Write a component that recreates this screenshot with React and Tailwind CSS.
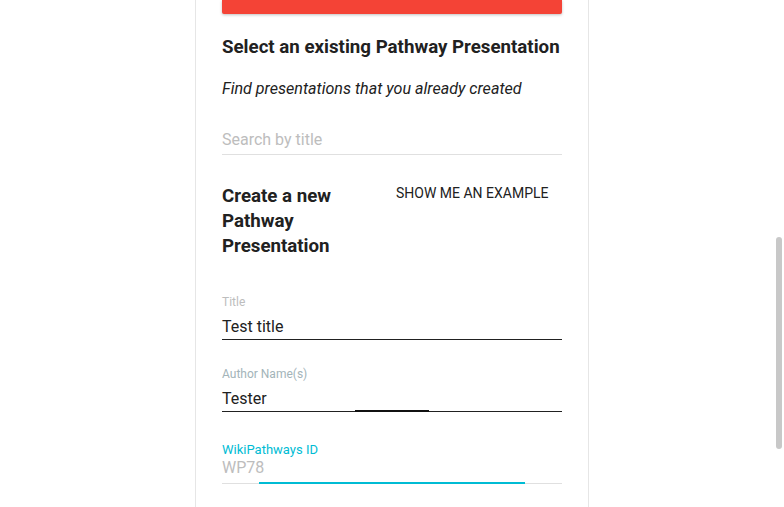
export default function App() {
  return (
    <div className="relative min-h-[507px] bg-white" style={{ fontFamily: "Roboto, 'Liberation Sans', sans-serif" }}>
      <div className="mx-auto w-[394px] min-h-[507px] border-x border-[#e6e6e6] bg-white px-[26px] pb-8">
        <div className="h-[14px] w-full rounded-b-[2px] bg-[#f44336] shadow-[0_1px_3px_rgba(0,0,0,0.25)]" />

        <h2 className="mt-[21px] text-[18.7px] leading-[24px] font-bold text-[#212121]">
          Select an existing Pathway Presentation
        </h2>
        <p className="mt-[18px] text-[16.1px] leading-[24px] italic text-[#212121]">
          Find presentations that you already created
        </p>
        <div className="mt-[27px] h-[27px] border-b border-[#e0e0e0] text-[16px] leading-[24px] text-[#bdbdbd]">
          Search by title
        </div>

        <div className="mt-[28px] flex items-start">
          <h3 className="mt-[1px] w-[170px] text-[18.7px] leading-[25px] font-bold text-[#212121]">
            Create a new Pathway Presentation
          </h3>
          <button className="ml-[4px] text-[14px] leading-[20px] text-[#212121] uppercase">
            Show me an example
          </button>
        </div>

        <div className="mt-[35px]">
          <div className="text-[12px] leading-[16px] text-[#bdbdbd]">Title</div>
          <div className="mt-[5px] h-[25px] border-b border-[#212121] text-[16px] leading-[24px] text-[#212121]">
            Test title
          </div>
        </div>

        <div className="mt-[26px]">
          <div className="text-[12px] leading-[16px] text-[#a3b4b9]">Author Name(s)</div>
          <div className="relative mt-[5px] h-[25px] border-b border-[#212121] text-[16px] leading-[24px] text-[#212121]">
            Tester
            <div className="absolute left-[133px] bottom-[-1px] h-[2px] w-[74px] bg-[#111111]" />
          </div>
        </div>

        <div className="mt-[30px]">
          <div className="text-[13px] leading-[16px] text-[#00bcd4]">WikiPathways ID</div>
          <div className="relative h-[26px] border-b border-[#e0e0e0] text-[16px] leading-[20px] text-[#bdbdbd]">
            WP78
            <div className="absolute left-[37px] bottom-[-1px] h-[2px] w-[266px] bg-[#00bcd4]" />
          </div>
        </div>
      </div>
      <div className="absolute right-[2px] top-[237px] h-[212px] w-[6px] rounded-full bg-[#c8c8c8]" />
    </div>
  );
}
